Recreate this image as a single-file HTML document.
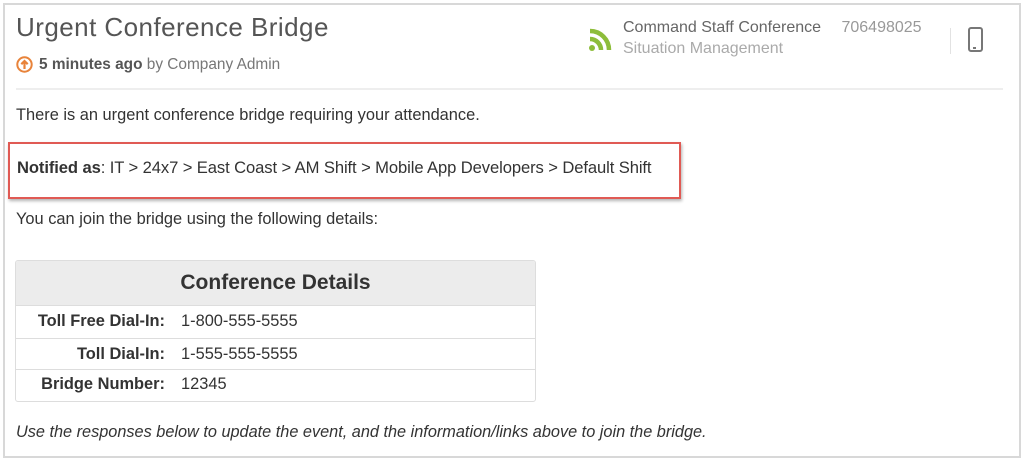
<!DOCTYPE html>
<html><head><style>
body{margin:0;width:1024px;height:459px;background:#fff;font-family:"Liberation Sans",Arial,sans-serif;position:relative;overflow:hidden}
.a{position:absolute;white-space:nowrap}
</style></head><body>
<div class="a" style="left:3px;top:3px;width:1014px;height:451px;border:2px solid #d8d8d8"></div>
<div class="a" style="left:16px;top:12px;font-size:26px;color:#555;letter-spacing:0.45px">Urgent Conference Bridge</div>
<svg class="a" style="left:16px;top:56px" width="17" height="17" viewBox="0 0 17 17"><circle cx="8.5" cy="8.5" r="7.2" fill="none" stroke="#e8833a" stroke-width="2"/><path d="M8.5 13V5M5.3 8.2L8.5 5l3.2 3.2" stroke="#e8833a" stroke-width="2.2" fill="none"/></svg>
<div class="a" style="left:39px;top:56px;font-size:15.4px;color:#777"><b style="color:#555">5 minutes ago</b> by Company Admin</div>
<svg class="a" style="left:588px;top:28px" width="24" height="24" viewBox="0 0 24 24"><circle cx="4" cy="20" r="3" fill="#8dbd3a"/><path d="M2 11a11 11 0 0 1 11 11M2 3a19 19 0 0 1 19 19" stroke="#8dbd3a" stroke-width="4.5" fill="none"/></svg>
<div class="a" style="left:623px;top:19px;font-size:16px;color:#666">Command Staff Conference <span style="color:#999;margin-left:16px">706498025</span></div>
<div class="a" style="left:623px;top:40px;font-size:16px;color:#aaa">Situation Management</div>
<div class="a" style="left:950px;top:28px;width:1px;height:26px;background:#e2e2e2"></div>
<div class="a" style="left:968px;top:27px;width:15px;height:25px;border:2px solid #777;border-radius:3px;box-sizing:border-box"></div>
<div class="a" style="left:973px;top:47px;width:3px;height:2px;background:#777"></div>
<div class="a" style="left:16px;top:88px;width:987px;height:2px;background:#eee"></div>
<div class="a" style="left:16px;top:106px;font-size:16.4px;color:#333">There is an urgent conference bridge requiring your attendance.</div>
<div class="a" style="left:8px;top:142px;width:669px;height:53px;border:2px solid #e05a54;box-shadow:1px 2px 3px rgba(0,0,0,.3)"></div>
<div class="a" style="left:17px;top:158px;font-size:16.6px;color:#333;letter-spacing:-0.1px"><b>Notified as</b>: IT &gt; 24x7 &gt; East Coast &gt; AM Shift &gt; Mobile App Developers &gt; Default Shift</div>
<div class="a" style="left:16px;top:210px;font-size:16.4px;color:#333">You can join the bridge using the following details:</div>
<div class="a" style="left:15px;top:260px;width:519px;height:140px;border:1px solid #ddd;border-radius:3px;overflow:hidden">
 <div style="height:44px;background:#ececec;border-bottom:1px solid #ddd;text-align:center;font-size:21px;font-weight:bold;color:#333;line-height:44px">Conference Details</div>
 <div style="height:32px;border-bottom:1px solid #ddd;font-size:16.4px;color:#333;line-height:30px;position:relative"><b style="position:absolute;right:370px">Toll Free Dial-In:</b><span style="position:absolute;left:165px">1-800-555-5555</span></div>
 <div style="height:30px;border-bottom:1px solid #ddd;font-size:16.4px;color:#333;line-height:30px;position:relative"><b style="position:absolute;right:370px">Toll Dial-In:</b><span style="position:absolute;left:165px">1-555-555-5555</span></div>
 <div style="height:31px;font-size:16.4px;color:#333;line-height:29px;position:relative"><b style="position:absolute;right:370px">Bridge Number:</b><span style="position:absolute;left:165px">12345</span></div>
</div>
<div class="a" style="left:16px;top:423px;font-size:16.3px;color:#333;font-style:italic">Use the responses below to update the event, and the information/links above to join the bridge.</div>
</body></html>
